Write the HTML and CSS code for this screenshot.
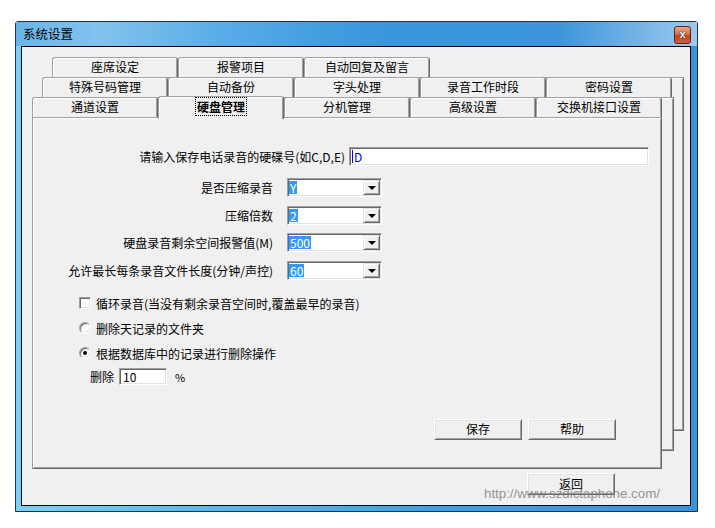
FILE: index.html
```html
<!DOCTYPE html>
<html lang="zh-CN">
<head>
<meta charset="utf-8">
<title>系统设置</title>
<link rel="stylesheet" href="styles.css">
</head>
<body>
<div class="screen">
  <div class="window">
    <div class="titlebar">
      <span class="title">系统设置</span>
      <span class="close">x</span>
    </div>
    <div class="client">
      <div class="tabctl">
        <div class="tabrow r1">
          <div class="tab">座席设定</div>
          <div class="tab">报警项目</div>
          <div class="tab">自动回复及留言</div>
        </div>
        <div class="tabrow r2">
          <div class="tab">特殊号码管理</div>
          <div class="tab">自动备份</div>
          <div class="tab">字头处理</div>
          <div class="tab">录音工作时段</div>
          <div class="tab">密码设置</div>
        </div>
        <div class="tabrow r3">
          <div class="tab">通道设置</div>
          <div class="tab sel"><span class="focus">硬盘管理</span></div>
          <div class="tab">分机管理</div>
          <div class="tab">高级设置</div>
          <div class="tab">交换机接口设置</div>
        </div>
        <div class="page">
          <div class="rowA">
            <div class="lbl">请输入保存电话录音的硬碟号(如C,D,E)</div>
            <div class="field wide"><span class="caret"></span><span class="blue">D</span></div>
          </div>
          <div class="combos">
            <div class="crow">
              <div class="lbl">是否压缩录音</div>
              <div class="combo"><div class="val"><span class="hl">Y</span></div><div class="drop"><i class="arrow"></i></div></div>
            </div>
            <div class="crow">
              <div class="lbl">压缩倍数</div>
              <div class="combo"><div class="val"><span class="hl">2</span></div><div class="drop"><i class="arrow"></i></div></div>
            </div>
            <div class="crow">
              <div class="lbl">硬盘录音剩余空间报警值(M)</div>
              <div class="combo"><div class="val"><span class="hl">500</span></div><div class="drop"><i class="arrow"></i></div></div>
            </div>
            <div class="crow">
              <div class="lbl">允许最长每条录音文件长度(分钟/声控)</div>
              <div class="combo"><div class="val"><span class="hl">60</span></div><div class="drop"><i class="arrow"></i></div></div>
            </div>
          </div>
          <div class="opts">
            <div class="opt"><span class="chk"></span><span>循环录音(当没有剩余录音空间时,覆盖最早的录音)</span></div>
            <div class="opt"><span class="radio"></span><span>删除天记录的文件夹</span></div>
            <div class="opt"><span class="radio on"></span><span>根据数据库中的记录进行删除操作</span></div>
          </div>
          <div class="delrow">
            <span>删除</span>
            <div class="field small">10</div>
            <span class="pct">%</span>
          </div>
          <div class="btnrow">
            <div class="btn">保存</div>
            <div class="btn">帮助</div>
          </div>
        </div>
      </div>
      <div class="footer">
        <div class="btn back">返回</div>
      </div>
      <div class="watermark">http://www.szdictaphone.com/</div>
    </div>
  </div>
</div>
</body>
</html>
```
FILE: styles.css
```css
* { box-sizing: border-box; }
html, body { margin: 0; padding: 0; background: #fff; }
body {
  font-family: "Noto Sans CJK SC", "Liberation Sans", sans-serif;
  font-size: 12px;
  color: #000;
}
.screen { width: 715px; height: 528px; padding: 21px 0 0 15px; }

.window {
  width: 683px;
  height: 491px;
  border: 1px solid #1f3346;
  border-radius: 3px 3px 0 0;
  background: linear-gradient(90deg, #7ad2f7 0%, #5cbcef 25%, #40a2e4 60%, #3a92dc 100%);
  padding: 0 6px 5px 5px;
  display: flex;
  flex-direction: column;
}
.titlebar {
  height: 24px;
  margin: 0 -6px 0 -5px;
  padding: 0 6px 0 7px;
  display: flex;
  align-items: center;
  justify-content: space-between;
  background:
    linear-gradient(90deg, rgba(255,255,255,0.10) 0%, rgba(255,255,255,0.28) 12%, rgba(255,255,255,0.05) 30%, rgba(255,255,255,0) 45%, rgba(255,255,255,0) 80%, rgba(255,255,255,0.18) 92%, rgba(255,255,255,0.35) 100%),
    linear-gradient(90deg, #56ade6 0%, #4fa9e6 30%, #3a96da 55%, #3d96db 80%, #6aaee3 100%);
}
.title { font-size: 12.5px; line-height: 16px; color: #000; }
.close {
  width: 17px;
  height: 18px;
  margin-top: 1px;
  border: 1px solid #5c2414;
  border-radius: 3px;
  background: linear-gradient(#eba58c 0%, #d8714f 45%, #c4431f 55%, #cc6040 100%);
  color: #fff;
  font-family: "Liberation Sans", sans-serif;
  font-weight: bold;
  font-size: 11px;
  line-height: 15px;
  text-align: center;
  text-shadow: 0 0 1px #3a0f05, 0 0 1px #3a0f05;
}

.client {
  position: relative;
  width: 670px;
  height: 460px;
  border: 1px solid #000;
  background: #f0f0f0;
  display: flex;
  flex-direction: column;
}

.tabctl {
  position: relative;
  z-index: 0;
  width: 630px;
  margin: 10px 0 0 10px;
}
.tabrow { display: flex; height: 20px; align-items: flex-start; }
.r1 { margin-left: 20px; }
.r2 { margin-left: 10px; }
.tab {
  flex: none;
  width: 126px;
  height: 20px;
  background: #f0f0f0;
  border-top: 1px solid #a0a0a0;
  border-left: 1px solid #a0a0a0;
  border-right: 1px solid #696969;
  border-radius: 3px 3px 0 0;
  box-shadow: inset 1px 1px 0 #fff, inset -1px 0 0 #a0a0a0;
  text-align: center;
  line-height: 18px;
}
.tab.sel {
  position: relative;
  z-index: 1;
  height: 23px;
  margin-top: -1px;
  line-height: 19px;
  font-weight: bold;
}
.focus { outline: 1px dotted #000; outline-offset: 0; padding: 0 1px; }

.page {
  position: relative;
  width: 630px;
  height: 352px;
  background: #f0f0f0;
  border: 1px solid;
  border-color: #a0a0a0 #696969 #696969 #a0a0a0;
  box-shadow: inset 1px 1px 0 #fff, inset -1px -1px 0 #a0a0a0;
  padding-top: 29px;
  display: flex;
  flex-direction: column;
}
.page::before, .page::after {
  content: "";
  position: absolute;
  left: -1px;
  top: -1px;
  width: 630px;
  height: 352px;
  background: #f0f0f0;
  border: 1px solid;
  border-color: #a0a0a0 #696969 #696969 #a0a0a0;
  box-shadow: inset 1px 1px 0 #fff, inset -1px -1px 0 #a0a0a0;
}
.page::before { z-index: -1; transform: translate(10px, -20px); }
.page::after { z-index: -2; transform: translate(20px, -40px); }

.rowA { display: flex; align-items: center; height: 19px; }
.rowA .lbl { width: 312px; margin-right: 4px; text-align: right; white-space: nowrap; }
.field {
  height: 19px;
  background: #fff;
  border: 1px solid;
  border-color: #a0a0a0 #fff #fff #a0a0a0;
  box-shadow: inset 1px 1px 0 #696969, inset -1px -1px 0 #e3e3e3;
  padding: 0 0 0 3px;
  display: flex;
  align-items: center;
  line-height: 14px;
}
.field.wide { width: 300px; padding-left: 2px; }
.caret { width: 1px; height: 13px; background: #0000ff; margin-right: 1px; }
.blue { color: #0000ff; }

.combos { margin-top: 12px; display: flex; flex-direction: column; gap: 8.5px; }
.crow { display: flex; align-items: center; height: 19px; }
.crow .lbl { width: 240px; margin-right: 14px; text-align: right; white-space: nowrap; }
.combo {
  width: 95px;
  height: 19px;
  display: flex;
  padding: 1px;
  background: #fff;
  border: 1px solid;
  border-color: #a0a0a0 #fff #fff #a0a0a0;
  box-shadow: inset 1px 1px 0 #696969, inset -1px -1px 0 #e3e3e3;
}
.val { flex: 1; display: flex; align-items: center; padding-left: 0; }
.hl { background: #3399ff; color: #fff; line-height: 13px; padding: 0 1px; }
.drop {
  width: 17px;
  height: 15px;
  background: #f0f0f0;
  border: 1px solid;
  border-color: #e3e3e3 #696969 #696969 #e3e3e3;
  box-shadow: inset 1px 1px 0 #fff, inset -1px -1px 0 #a0a0a0;
  display: flex;
  align-items: center;
  justify-content: center;
}
.arrow {
  width: 0;
  height: 0;
  border-top: 4px solid #000;
  border-left: 4px solid transparent;
  border-right: 4px solid transparent;
  margin-top: 1px;
}

.opts { margin: 15px 0 0 46px; display: flex; flex-direction: column; gap: 8px; }
.opt { display: flex; align-items: center; height: 17px; white-space: nowrap; }
.chk {
  width: 12px;
  height: 12px;
  margin-right: 5px;
  background: #fff;
  border: 1px solid;
  border-color: #a0a0a0 #fff #fff #a0a0a0;
  box-shadow: inset 1px 1px 0 #696969, inset -1px -1px 0 #e3e3e3;
}
.radio {
  width: 12px;
  height: 12px;
  margin-right: 5px;
  border-radius: 50%;
  background: #fff;
  border: 1px solid;
  border-color: #a0a0a0 #fff #fff #a0a0a0;
  box-shadow: inset 1px 1px 0 #696969, inset -1px -1px 0 #e3e3e3;
  display: flex;
  align-items: center;
  justify-content: center;
}
.radio.on::after {
  content: "";
  width: 4px;
  height: 4px;
  border-radius: 50%;
  background: #000;
}

.delrow { margin: 6.5px 0 0 57px; display: flex; align-items: center; height: 17px; }
.field.small { width: 48px; height: 17px; margin-left: 5px; }
.pct { margin-left: 8px; font-size: 11px; }

.btnrow { margin-top: 34px; display: flex; justify-content: flex-end; gap: 6px; padding-right: 45px; }
.btn {
  width: 88px;
  height: 21px;
  background: #f0f0f0;
  border: 1px solid;
  border-color: #fff #696969 #696969 #fff;
  box-shadow: inset 1px 1px 0 #e3e3e3, inset -1px -1px 0 #a0a0a0;
  text-align: center;
  line-height: 18px;
}

.footer { margin: 4px 0 0 505px; }
.btn.back { height: 22px; line-height: 19px; }

.watermark {
  position: absolute;
  left: 462px;
  top: 439px;
  font-family: "Liberation Sans", sans-serif;
  font-size: 13.3px;
  line-height: 16px;
  color: rgba(120, 120, 120, 0.8);
  white-space: nowrap;
}
```
